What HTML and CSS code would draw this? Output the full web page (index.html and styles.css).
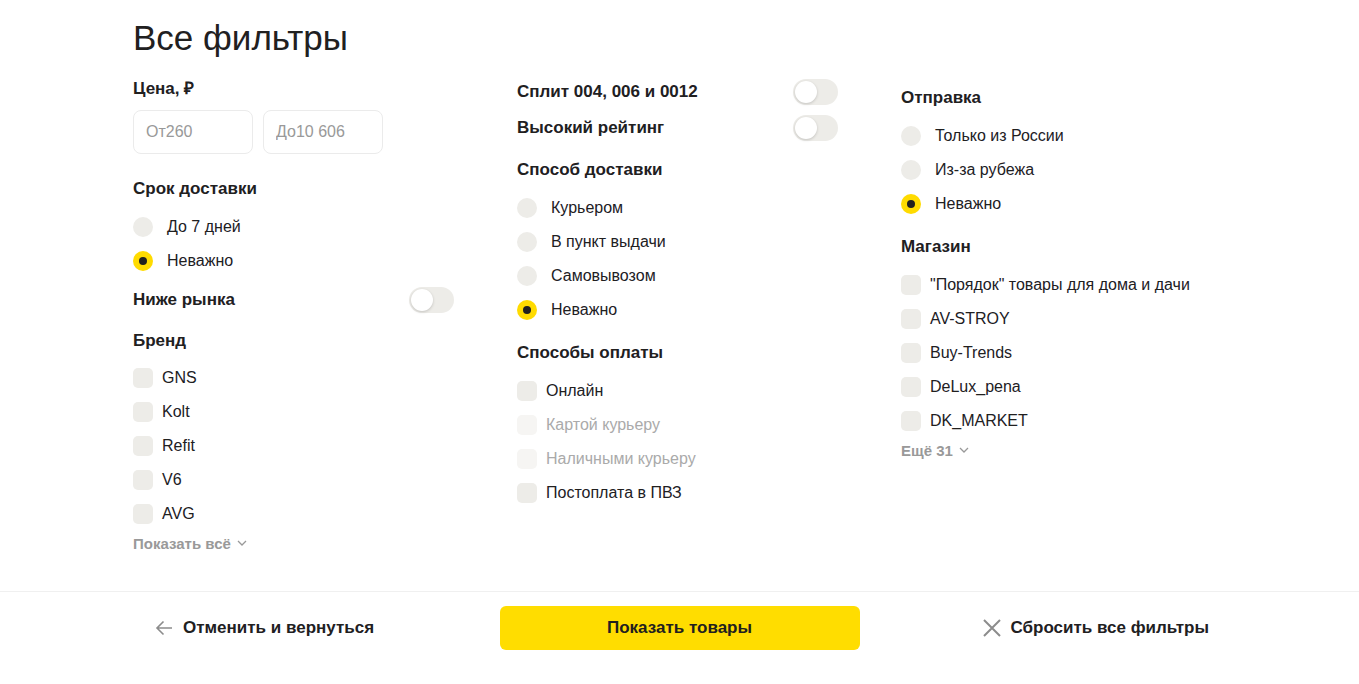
FILE: index.html
```html
<!DOCTYPE html>
<html lang="ru">
<head>
    <meta charset="UTF-8">
    <meta name="viewport" content="width=device-width, initial-scale=1.0">
    <title>Все фильтры</title>
    <link rel="stylesheet" href="styles.css">
</head>
<body>
    <div class="page">
        <div class="content">
            <h1 class="title">Все фильтры</h1>
            <div class="filters">
                <div class="col col-first">
                    <div class="group group-price">
                        <h3 class="group-title">Цена, ₽</h3>
                        <div class="price">
                            <input type="text" placeholder="От260">
                            <input type="text" placeholder="До10 606">
                        </div>
                    </div>
                    <div class="group group-tight">
                        <h3 class="group-title">Срок доставки</h3>
                        <label class="row"><span class="radio"></span>До 7 дней</label>
                        <label class="row"><span class="radio checked"></span>Неважно</label>
                    </div>
                    <div class="group group-near">
                        <div class="toggle-row"><span>Ниже рынка</span><span class="toggle"></span></div>
                    </div>
                    <div class="group">
                        <h3 class="group-title title-close">Бренд</h3>
                        <label class="row"><span class="check"></span>GNS</label>
                        <label class="row"><span class="check"></span>Kolt</label>
                        <label class="row"><span class="check"></span>Refit</label>
                        <label class="row"><span class="check"></span>V6</label>
                        <label class="row"><span class="check"></span>AVG</label>
                        <div class="more">Показать всё
                            <svg width="10" height="6" viewBox="0 0 10 6"><path d="M1 1l4 4 4-4" fill="none" stroke="#999" stroke-width="1.3"/></svg>
                        </div>
                    </div>
                </div>

                <div class="col">
                    <div class="group">
                        <div class="toggle-row"><span>Сплит 004, 006 и 0012</span><span class="toggle"></span></div>
                        <div class="toggle-row"><span>Высокий рейтинг</span><span class="toggle"></span></div>
                    </div>
                    <div class="group group-wide">
                        <h3 class="group-title">Способ доставки</h3>
                        <label class="row"><span class="radio"></span>Курьером</label>
                        <label class="row"><span class="radio"></span>В пункт выдачи</label>
                        <label class="row"><span class="radio"></span>Самовывозом</label>
                        <label class="row"><span class="radio checked"></span>Неважно</label>
                    </div>
                    <div class="group">
                        <h3 class="group-title">Способы оплаты</h3>
                        <label class="row"><span class="check"></span>Онлайн</label>
                        <label class="row disabled"><span class="check"></span>Картой курьеру</label>
                        <label class="row disabled"><span class="check"></span>Наличными курьеру</label>
                        <label class="row"><span class="check"></span>Постоплата в ПВЗ</label>
                    </div>
                </div>

                <div class="col col-last">
                    <div class="group group-wide">
                        <h3 class="group-title">Отправка</h3>
                        <label class="row"><span class="radio"></span>Только из России</label>
                        <label class="row"><span class="radio"></span>Из-за рубежа</label>
                        <label class="row"><span class="radio checked"></span>Неважно</label>
                    </div>
                    <div class="group">
                        <h3 class="group-title">Магазин</h3>
                        <label class="row"><span class="check"></span>"Порядок" товары для дома и дачи</label>
                        <label class="row"><span class="check"></span>AV-STROY</label>
                        <label class="row"><span class="check"></span>Buy-Trends</label>
                        <label class="row"><span class="check"></span>DeLux_pena</label>
                        <label class="row"><span class="check"></span>DK_MARKET</label>
                        <div class="more">Ещё 31
                            <svg width="10" height="6" viewBox="0 0 10 6"><path d="M1 1l4 4 4-4" fill="none" stroke="#999" stroke-width="1.3"/></svg>
                        </div>
                    </div>
                </div>
            </div>
        </div>

        <div class="footer">
            <div class="footer-inner">
                <button class="link-btn back">
                    <svg width="18" height="16" viewBox="0 0 18 16"><path d="M17 8H2M8.5 1.5L2 8l6.5 6.5" fill="none" stroke="#8c8c8c" stroke-width="1.6"/></svg>
                    Отменить и вернуться
                </button>
                <button class="main-btn">Показать товары</button>
                <button class="link-btn reset">
                    <svg width="18" height="18" viewBox="0 0 18 18"><path d="M1 1l16 16M17 1L1 17" fill="none" stroke="#8c8c8c" stroke-width="2"/></svg>
                    Сбросить все фильтры
                </button>
            </div>
        </div>
    </div>
</body>
</html>
```

FILE: styles.css
```css
*{
    box-sizing: border-box;
}
body{
    margin: 0;
    font-family: "Liberation Sans", Arial, sans-serif;
    color: #21201f;
    background: #fff;
}
.page{
    min-height: 100vh;
    display: flex;
    flex-direction: column;
}
.content{
    width: 1093px;
    margin: 0 auto;
    padding-top: 16px;
}
.title{
    margin: 0;
    font-size: 35px;
    line-height: 44px;
    font-weight: normal;
}
.filters{
    display: grid;
    grid-template-columns: 321px 321px 321px;
    column-gap: 63px;
    align-items: start;
    margin-top: 14px;
}
.col-first{
    padding-top: 3px;
}
.col-last{
    padding-top: 12px;
}
.group{
    margin-bottom: 12px;
}
.group-price{
    margin-bottom: 23px;
}
.group-tight{
    margin-bottom: 4px;
}
.group-near{
    margin-bottom: 11px;
}
.group-wide{
    margin-bottom: 14px;
}
.group-title{
    margin: 0 0 9px;
    font-size: 17px;
    line-height: 24px;
    font-weight: bold;
}
.title-close{
    margin-bottom: 8px;
}
.price{
    display: flex;
    gap: 10px;
}
.price input{
    width: 120px;
    height: 44px;
    border: 1px solid #ebebeb;
    border-radius: 8px;
    padding: 0 12px;
    font-family: inherit;
    font-size: 16px;
    outline: 0;
}
.price input::placeholder{
    color: #999;
}
.row{
    display: flex;
    align-items: center;
    height: 34px;
    font-size: 16px;
}
.radio{
    width: 20px;
    height: 20px;
    border-radius: 50%;
    background: #edece8;
    margin-right: 14px;
    flex: none;
    display: flex;
    align-items: center;
    justify-content: center;
}
.radio.checked{
    background: #ffdb00;
}
.radio.checked::after{
    content: "";
    width: 8px;
    height: 8px;
    border-radius: 50%;
    background: #21201f;
}
.check{
    width: 20px;
    height: 20px;
    border-radius: 5px;
    background: #edece8;
    margin-right: 9px;
    flex: none;
}
.row.disabled{
    color: #aaa;
}
.row.disabled .check{
    background: #f6f5f3;
}
.toggle-row{
    display: flex;
    align-items: center;
    justify-content: space-between;
    height: 36px;
    font-size: 17px;
    font-weight: bold;
}
.toggle{
    width: 45px;
    height: 26px;
    border-radius: 13px;
    background: #edece8;
    padding: 2px;
}
.toggle::before{
    content: "";
    display: block;
    width: 22px;
    height: 22px;
    border-radius: 50%;
    background: #fff;
    box-shadow: 0 1px 3px rgba(0,0,0,.18);
}
.more{
    display: flex;
    align-items: center;
    gap: 6px;
    margin-top: 2px;
    height: 20px;
    font-size: 15px;
    font-weight: bold;
    color: #999;
}
.footer{
    margin-top: auto;
    border-top: 1px solid #f0f0f0;
    padding: 14px 0 34px;
}
.footer-inner{
    width: 1093px;
    margin: 0 auto;
    display: grid;
    grid-template-columns: 1fr 360px 1fr;
    align-items: center;
}
.link-btn{
    display: flex;
    align-items: center;
    gap: 10px;
    height: 44px;
    padding: 0 20px;
    border: 0;
    background: none;
    font-family: inherit;
    font-size: 17px;
    font-weight: bold;
    color: #21201f;
    cursor: pointer;
}
.back{
    justify-self: start;
    padding-left: 22px;
}
.reset{
    justify-self: end;
    padding-right: 17px;
}
.main-btn{
    height: 44px;
    border: 0;
    border-radius: 6px;
    background: #ffdd00;
    font-family: inherit;
    font-size: 17px;
    font-weight: bold;
    color: #21201f;
    cursor: pointer;
}
```
